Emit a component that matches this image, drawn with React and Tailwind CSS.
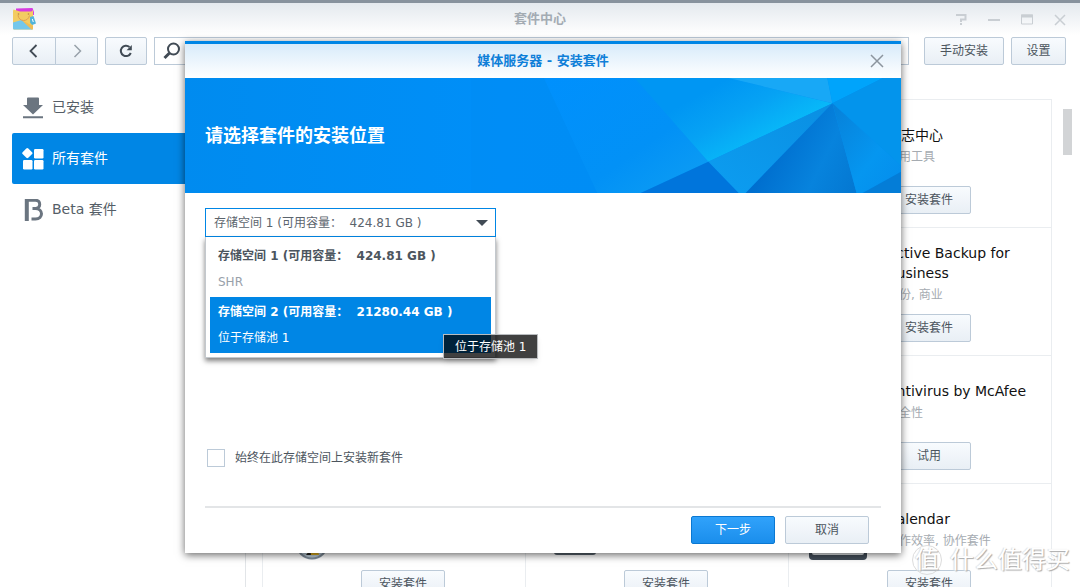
import React, { useState } from "react";
import clsx from "clsx";

const volumes = [
  { id: "1", name: "存储空间 1 (可用容量：\u00a0 424.81 GB )", desc: "SHR" },
  { id: "2", name: "存储空间 2 (可用容量：\u00a0 21280.44 GB )", desc: "位于存储池 1" },
];

const packages = [
  {},
  {},
  { name: "日志中心", category: "实用工具", action: "安装套件" },
  {},
  {},
  { name: "Active Backup for Business", category: "备份, 商业", action: "安装套件" },
  {},
  {},
  { name: "Antivirus by McAfee", category: "安全性", action: "试用" },
  { icon: "disc", action: "安装套件" },
  { icon: "flat", action: "安装套件" },
  { icon: "calendar", name: "Calendar", category: "工作效率, 协作套件", action: "安装套件" },
];

function Button({ className, primary, children, ...props }) {
  return (
    <button
      type="button"
      className={clsx(
        "flex h-7 shrink-0 items-center justify-center rounded-xs border text-[12px]",
        primary
          ? "border-[#0a78d2] bg-linear-to-b from-[#30a2fb] to-[#1a8eec] text-white"
          : "border-[#bccad8] bg-linear-to-b from-[#f8fbfe] to-[#e9eff5] text-[#4c555e]",
        className
      )}
      {...props}
    >
      {children}
    </button>
  );
}

function AppLogo() {
  return (
    <svg width="24" height="24" viewBox="0 0 24 24" aria-hidden="true">
      <path d="M4 1.500 20.500 1l1.500 4v3L4 6z" fill="#d63be0" />
      <path d="M1.500 2.500 8 4.500h11.500L21 3v18c0 1-.7 1.500-1.500 1.500h-17c-.9 0-1.500-.5-1.500-1.500V4z" fill="#f3cc62" />
      <path d="M1 15.500 9.500 13 21 22.500H2.500C1.600 22.500 1 22 1 21z" fill="#74c7ea" />
      <path d="m9.500 13 11.500 6v2c0 1-.7 1.500-1.500 1.500z" fill="#f0bd55" />
      <path d="M6 8c.5 7 10 7.500 11.500.5" fill="none" stroke="#dfa052" strokeWidth="1" />
      <circle cx="6.500" cy="7" r=".8" fill="#b98440" />
      <circle cx="16.500" cy="7" r=".8" fill="#b98440" />
      <path d="m18 10 3.500-1 2.500 7.500-3.800 1.500-2-2z" fill="#4fb4dc" />
      <path d="m20.300 12 1 3" stroke="#fff" strokeWidth="1" />
    </svg>
  );
}

function TitleBar() {
  return (
    <header className="flex h-8 shrink-0 items-center bg-linear-to-b from-[#e4e9ee] to-white px-3">
      <div className="flex-1">
        <AppLogo />
      </div>
      <h1 className="text-[13px] font-bold text-[#a3abb3]">套件中心</h1>
      <div className="flex flex-1 justify-end gap-[17px] text-[#c9ced3]">
        <button type="button" aria-label="帮助">
          <svg width="16" height="16" viewBox="0 0 16 16" fill="none" stroke="currentColor" strokeWidth="2">
            <path d="M3 4h9.500v4.500H8V11M8 12v2" />
          </svg>
        </button>
        <button type="button" aria-label="最小化">
          <svg width="16" height="16" viewBox="0 0 16 16" stroke="currentColor" strokeWidth="2">
            <path d="M2 9h12" />
          </svg>
        </button>
        <button type="button" aria-label="最大化">
          <svg width="16" height="16" viewBox="0 0 16 16" fill="none" stroke="currentColor">
            <path d="M2.500 4h11v9h-11z" />
            <path d="M2 5h12" strokeWidth="3" />
          </svg>
        </button>
        <button type="button" aria-label="关闭">
          <svg width="16" height="16" viewBox="0 0 16 16" stroke="currentColor" strokeWidth="1.500">
            <path d="m3 4 10 10M13 4 3 14" />
          </svg>
        </button>
      </div>
    </header>
  );
}

function Toolbar() {
  return (
    <div className="flex shrink-0 gap-[7px] px-3 pt-0.5 pr-3.5">
      <div className="flex">
        <Button className="w-11 rounded-r-none" aria-label="后退">
          <svg width="16" height="16" viewBox="0 0 16 16" fill="none" stroke="#414b55" strokeWidth="1.800">
            <path d="M10.500 2 4.500 8l6 6" />
          </svg>
        </Button>
        <Button className="-ml-px w-[43px] rounded-l-none" aria-label="前进">
          <svg width="16" height="16" viewBox="0 0 16 16" fill="none" stroke="#98a1aa" strokeWidth="1.500">
            <path d="m5.500 2 6 6-6 6" />
          </svg>
        </Button>
      </div>
      <Button className="w-[42px]" aria-label="刷新">
        <svg width="16" height="16" viewBox="0 0 16 16" fill="none" stroke="#414b55" strokeWidth="2">
          <path d="M12.800 10A5.200 5.200 0 1 1 11.500 4" />
          <path d="M13.800 2v5.200H8.600z" fill="#414b55" stroke="none" />
        </svg>
      </Button>
      <label className="flex h-7 flex-1 items-center border border-[#bccad8] bg-white px-2">
        <svg width="18" height="18" viewBox="0 0 18 18" fill="none" stroke="#414b55" aria-hidden="true">
          <circle cx="10.500" cy="7" r="5.500" strokeWidth="2" />
          <path d="m6.500 11-5 5" strokeWidth="3" />
        </svg>
        <input type="text" aria-label="搜索" className="min-w-0 flex-1 outline-none" />
      </label>
      <Button className="ml-2 w-20">手动安装</Button>
      <Button className="w-[55px]">设置</Button>
    </div>
  );
}

function Sidebar() {
  const item = "flex h-[51px] items-center gap-2 pl-2.5 text-[14px]";
  return (
    <nav className="w-[246px] shrink-0 border-r border-[#e2e5e8] pt-[17px] pl-3 text-[#555e67]">
      <a href="#installed" className={item}>
        <svg width="22" height="22" viewBox="0 0 22 22" fill="#6b7580" aria-hidden="true">
          <path d="M5 1.500Q5 .5 6 .5h10q1 0 1 1V8h4L11 17.500 1 8h4zM1 19.300h20v2H1z" />
        </svg>
        已安装
      </a>
      <a href="#all" className={clsx(item, "rounded-l-xs bg-[#0086e5] text-white")}>
        <svg width="22" height="22" viewBox="0 0 22 22" fill="#fff" aria-hidden="true">
          <path d="M5.300 0q.5 0 1 .5l3.800 3.800q.8.900 0 1.700L6.300 9.800q-1 .9-1.900 0L.6 6q-.8-.8 0-1.700L4.300.5q.5-.5 1-.5z" />
          <rect x="12" y="1" width="9.500" height="9.500" rx="1.200" />
          <rect x="1" y="12" width="9.500" height="9.500" rx="1.200" />
          <rect x="12" y="12" width="9.500" height="9.500" rx="1.200" />
        </svg>
        所有套件
      </a>
      <a href="#beta" className={item}>
        <svg width="22" height="22" viewBox="0 0 22 22" fill="none" stroke="#6b7580" aria-hidden="true">
          <path d="M4.800 22V0" strokeWidth="4" />
          <path d="M4 1.300h9.500c5.500 0 5.500 7.700.5 8.200h-3.500M13.500 9.500c8 .3 8 10.500 0 10.500H9.500" strokeWidth="3" />
        </svg>
        Beta 套件
      </a>
    </nav>
  );
}

function PackageIcon({ type }) {
  return (
    <svg width="58" height="58" viewBox="0 0 58 58" aria-hidden="true">
      {type === "disc" && (
        <g>
          <circle cx="29" cy="41" r="16.500" fill="#7d8b98" />
          <circle cx="29" cy="41" r="14.500" fill="#bccdd8" />
          <path d="M24 53h12l-2-8h-8z" fill="#e3b21c" />
          <path d="M23 53h5l-1-5z" fill="#222" />
        </g>
      )}
      {type === "flat" && <rect x="8" y="10" width="42" height="43" rx="3" fill="#59636e" />}
      {type === "calendar" && (
        <g>
          <rect width="58" height="58" rx="4" fill="#434e5a" />
          <rect x="3" y="3" width="52" height="50" rx="2" fill="#e8ecef" />
        </g>
      )}
    </svg>
  );
}

function PackageCard({ pkg }) {
  return (
    <li className="flex h-32 gap-5 border-r border-b border-[#eaedf0] pl-5">
      {pkg.action && (
        <>
          <div className="pt-[18px]">
            <PackageIcon type={pkg.icon} />
          </div>
          <div className="w-[150px]">
            <div className="flex h-[86px] flex-col justify-center pt-2">
              <h3 className="text-[14px] leading-5 text-[#111]">{pkg.name}</h3>
              <p className="text-[12px] leading-6 text-[#a5abb1]">{pkg.category}</p>
            </div>
            <Button className="w-[84px]">{pkg.action}</Button>
          </div>
        </>
      )}
    </li>
  );
}

function HeroArt() {
  return (
    <svg
      className="absolute inset-0 h-full w-full"
      viewBox="0 0 716 114"
      preserveAspectRatio="xMaxYMid slice"
      aria-hidden="true"
    >
      <defs>
        <linearGradient id="base" x1="0" x2="1">
          <stop offset="0" stopColor="#008bef" />
          <stop offset=".45" stopColor="#008ff8" />
          <stop offset="1" stopColor="#0090f2" />
        </linearGradient>
        <linearGradient id="soft" x1="0" y1="0" x2="1" y2="1">
          <stop offset="0" stopColor="#0090fd" />
          <stop offset=".6" stopColor="#0291f6" />
          <stop offset="1" stopColor="#0f9ff2" />
        </linearGradient>
        <linearGradient id="cyan" gradientUnits="userSpaceOnUse" x1="545" y1="0" x2="580" y2="62">
          <stop offset="0" stopColor="#0096f3" />
          <stop offset=".5" stopColor="#06a2f4" />
          <stop offset="1" stopColor="#08b8f8" />
        </linearGradient>
        <linearGradient id="deep" gradientUnits="userSpaceOnUse" x1="590" y1="70" x2="670" y2="110">
          <stop offset="0" stopColor="#006fcf" />
          <stop offset=".55" stopColor="#0783dd" />
          <stop offset="1" stopColor="#0478d2" />
        </linearGradient>
        <linearGradient id="mid" x1="1" y1="0" x2="0" y2="1">
          <stop offset="0" stopColor="#0a8fe2" />
          <stop offset="1" stopColor="#0c9df1" />
        </linearGradient>
        <linearGradient id="right" x1="0" y1="0" x2="1" y2="1">
          <stop offset="0" stopColor="#0780d8" />
          <stop offset=".6" stopColor="#0596f0" />
          <stop offset="1" stopColor="#048dec" />
        </linearGradient>
      </defs>
      <path d="M0 0h716v114H0z" fill="url(#base)" />
      <path d="M290 0h72l53 114H290z" fill="#008bf3" opacity=".5" />
      <path d="M362 0h90l73 83-67 31h-43z" fill="url(#soft)" />
      <path d="M452 0h93l103 25-123 58z" fill="url(#cyan)" />
      <path d="M545 0h98l5 25z" fill="#18a8f6" />
      <path d="M643 0h55l-50 25z" fill="#00a4fb" />
      <path d="m648 25 50-25h18v87z" fill="#0394ec" />
      <path d="M648 25 525 83l30 31h7z" fill="url(#mid)" />
      <path d="m525 83-67 31h97z" fill="#0075dc" />
      <path d="m648 25-86 89h110z" fill="url(#deep)" />
      <path d="m648 25 68 62v6l-38 21h-6z" fill="url(#right)" />
      <path d="m716 93-38 21h38z" fill="#047dd7" />
    </svg>
  );
}

function VolumeSelect() {
  const [volume, setVolume] = useState("1");
  const [hovered, setHovered] = useState("2");

  return (
    <div className="relative w-[291px]">
      <div className="border border-[#0086e5] bg-white">
        <select
          aria-label="安装位置"
          value={volume}
          onChange={(e) => setVolume(e.target.value)}
          className="block h-[27px] w-full appearance-none pl-2 text-[12px] text-[#5b646d] outline-none"
        >
          {volumes.map((v) => (
            <option key={v.id} value={v.id}>
              {v.name}
            </option>
          ))}
        </select>
      </div>
      <svg className="pointer-events-none absolute top-3 right-2" width="12" height="6" viewBox="0 0 12 6" aria-hidden="true">
        <path d="M0 0h12L6 6z" fill="#414b55" />
      </svg>

      {/* Options */}
      <ul role="listbox" className="absolute top-full left-0 w-full border border-t-0 border-[#c3c8cd] bg-white p-1 shadow-[0_3px_5px_rgba(0,0,0,0.5)]">
        {volumes.map((v) => (
          <li
            key={v.id}
            role="option"
            aria-selected={v.id === volume}
            onMouseEnter={() => setHovered(v.id)}
            onClick={() => setVolume(v.id)}
            className={clsx(
              "h-14 px-2 pt-0.5 leading-[26px]",
              hovered === v.id ? "bg-[#0086e5] text-white" : "text-[#4c555e]"
            )}
          >
            <div className="text-[12px] font-bold whitespace-nowrap">{v.name}</div>
            <div className={clsx("text-[12px]", hovered !== v.id && "text-[#98a1aa]")}>{v.desc}</div>
          </li>
        ))}
      </ul>

      {/* Tooltip */}
      <div role="tooltip" className="absolute top-[126px] left-[238px] flex h-[25px] items-center border border-[#b9bcbf] bg-black/75 px-[11px] text-[12px] whitespace-nowrap text-white shadow-md">
        位于存储池 1
      </div>
    </div>
  );
}

function InstallDialog() {
  const [always, setAlways] = useState(false);

  return (
    <div className="absolute inset-0 flex items-start justify-center pt-[38px] pl-1.5">
      <section
        role="dialog"
        aria-labelledby="dialog-title"
        className="w-[716px] max-w-full border-t-3 border-[#0086e5] bg-white shadow-[0_2px_8px_rgba(0,0,0,0.6)]"
      >
        <div className="flex h-[34px] items-center bg-linear-to-b from-[#d8ebfa] to-white px-4">
          <h2 id="dialog-title" className="flex-1 pl-4 text-center text-[13px] font-bold text-[#0f7fd8]">
            媒体服务器 - 安装套件
          </h2>
          <button type="button" aria-label="关闭">
            <svg width="16" height="16" viewBox="0 0 16 16" stroke="#8c959e" strokeWidth="1.500">
              <path d="m2 2 12 12M14 2 2 14" />
            </svg>
          </button>
        </div>
        <div className="relative flex h-[115px] items-center overflow-hidden bg-[#008df0] pl-5">
          <HeroArt />
          <h3 className="relative text-[18px] font-bold text-white">请选择套件的安装位置</h3>
        </div>
        <div className="px-5 pt-[15px] pb-[9px]">
          <VolumeSelect />
          <label className="mt-[211px] flex h-5 items-center gap-2.5 pl-0.5 text-[12px] text-[#4c555e]">
            <input
              type="checkbox"
              checked={always}
              onChange={(e) => setAlways(e.target.checked)}
              className="h-[18px] w-[18px] appearance-none border border-[#bccad8] bg-white checked:bg-[#0086e5]"
            />
            始终在此存储空间上安装新套件
          </label>
          <div className="mt-[38px] flex justify-end gap-2.5 border-t-2 border-[#e3e5e7] pt-2 pr-3">
            <Button primary className="w-[84px]">下一步</Button>
            <Button className="w-[84px]">取消</Button>
          </div>
        </div>
      </section>
    </div>
  );
}

function Watermark() {
  return (
    <div className="pointer-events-none absolute right-2.5 bottom-3 flex items-center gap-2 text-white [text-shadow:1px_1px_1px_#aaa,-1px_0_1px_#ddd]">
      <span className="flex h-[30px] w-[30px] items-center justify-center rounded-full border border-[#dcdcdc] text-[24px]">值</span>
      <span className="text-[24px] leading-[30px]">什么值得买</span>
    </div>
  );
}

export default function App() {
  return (
    <div className="relative flex h-screen flex-col overflow-hidden border-t-3 border-[#87929d] bg-white font-['DejaVu_Sans','Noto_Sans_CJK_SC',sans-serif]">
      <TitleBar />
      <Toolbar />
      <div className="flex min-h-0 flex-1">
        <Sidebar />
        <main className="flex min-w-0 flex-1 overflow-hidden pt-[34px] pl-4">
          <ul className="grid flex-1 grid-cols-3 content-start border-t border-l border-[#eaedf0]">
            {packages.map((pkg, i) => (
              <PackageCard key={i} pkg={pkg} />
            ))}
          </ul>
          <div className="w-7 shrink-0 pt-2.5 pl-[11px]">
            <div className="h-[46px] w-[9px] bg-[#d2d4d6]" />
          </div>
        </main>
      </div>
      <InstallDialog />
      <Watermark />
    </div>
  );
}
